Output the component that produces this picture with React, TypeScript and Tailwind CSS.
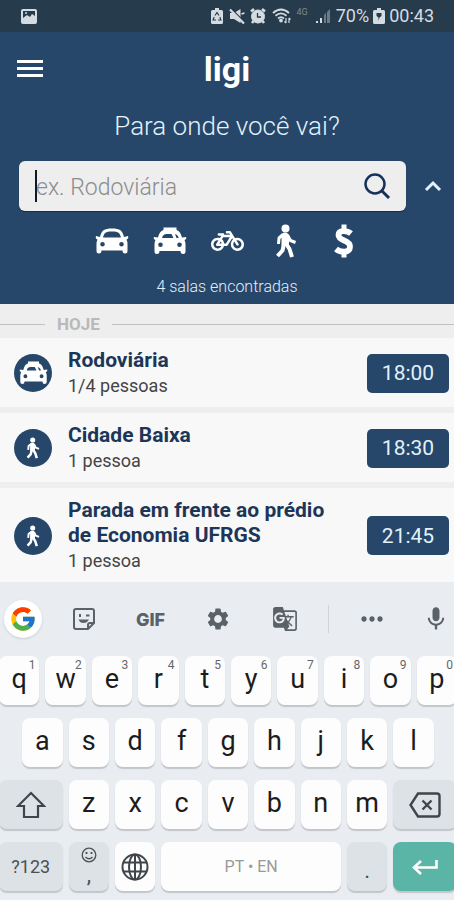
import React, { useState } from 'react';
import { FcGoogle } from 'react-icons/fc';
import { FaBicycle } from 'react-icons/fa';
import { MdSettings, MdMic, MdGTranslate, MdMoreHoriz } from 'react-icons/md';

interface IconProps { className?: string; }
interface Room { id: number; title: string; people: string; time: string; kind: 'taxi' | 'walk'; }

const rooms: Room[] = [
  { id: 1, title: 'Rodoviária', people: '1/4 pessoas', time: '18:00', kind: 'taxi' },
  { id: 2, title: 'Cidade Baixa', people: '1 pessoa', time: '18:30', kind: 'walk' },
  { id: 3, title: 'Parada em frente ao prédio de Economia UFRGS', people: '1 pessoa', time: '21:45', kind: 'walk' },
];

const CarIcon: React.FC<IconProps> = ({ className }) => (
  <svg viewBox="0 0 34 28" className={className} fill="currentColor" fillRule="evenodd">
    <path d="M5 10 C6.500 3.500 9 1.500 17 1.500 S27.500 3.500 29 10 L33 9 Q34 11.500 31.500 12.500 Q32.500 14.500 32.500 17 V24 Q32.500 26.500 30 26.500 Q27.500 26.500 27.500 23.500 H6.500 Q6.500 26.500 4 26.500 Q1.500 26.500 1.500 24 V17 Q1.500 14.500 2.500 12.500 Q0 11.500 1 9 Z M8 10.500 H26 C24.800 6 23.500 4.500 17 4.500 S9.200 6 8 10.500 Z M7.500 15 A2.300 2.300 0 1 0 7.500 19.600 A2.300 2.300 0 1 0 7.500 15 Z M26.500 15 A2.300 2.300 0 1 0 26.500 19.600 A2.300 2.300 0 1 0 26.500 15 Z" />
  </svg>
);

const TaxiIcon: React.FC<IconProps> = ({ className }) => (
  <svg viewBox="0 0 34 28" className={className} fill="currentColor" fillRule="evenodd">
    <path d="M10.500 3 V0.500 H23.500 V3 C26.500 4 27.700 6 29 10.500 L33 10 Q34 12 31.500 13 Q32.500 15 32.500 17 V24.500 Q32.500 27 30 27 Q27.500 27 27.500 24 H6.500 Q6.500 27 4 27 Q1.500 27 1.500 24.500 V17 Q1.500 15 2.500 13 Q0 12 1 10 L5 10.500 C6.300 6 7.500 4 10.500 3 Z M9 11 H20.500 L18.500 7 H13.500 C11 7 10 8 9 11 Z M23.500 11 H25.700 C25.200 9 24.600 8 22 7 Z M7.500 15.500 A2.300 2.300 0 1 0 7.500 20.100 A2.300 2.300 0 1 0 7.500 15.500 Z M26.500 15.500 A2.300 2.300 0 1 0 26.500 20.100 A2.300 2.300 0 1 0 26.500 15.500 Z" />
  </svg>
);

const WalkIcon: React.FC<IconProps> = ({ className }) => (
  <svg viewBox="0 0 22 34" className={className} fill="none" stroke="currentColor" strokeLinejoin="round">
    <circle cx="10.500" cy="4.500" r="4" fill="currentColor" stroke="none" />
    <path d="M7.500 10.500 Q10.500 8.500 13 11 L14 14 L12.500 21 H7.500 Z" fill="currentColor" strokeWidth="2" />
    <path d="M8 10.500 L4 14 L3.500 20" strokeWidth="3" />
    <path d="M13 12 L15.500 16.500 L20.500 18.500" strokeWidth="3" />
    <path d="M9 20 L7.500 26.500 L2.500 32" strokeWidth="4" />
    <path d="M11 19.500 L14.500 25 L17 33" strokeWidth="4" />
  </svg>
);

const DollarIcon: React.FC<IconProps> = ({ className }) => (
  <svg viewBox="0 0 20 34" className={className} fill="none" stroke="currentColor">
    <path d="M10 0.500 V7 M10 27 V33.500" strokeWidth="5" />
    <path d="M17 9.500 C13.500 6.500 4.500 5.500 4.500 11 C4.500 17.500 16 15.500 16 22.500 C16 29.500 6 28.500 2 25" strokeWidth="5.800" />
  </svg>
);

const StatusBar = () => (
  <div className="flex h-8 items-center justify-between bg-[#263b4b] pr-5 pl-5 text-[#d5dce1]">
    <svg viewBox="0 0 18 17" className="h-[17px] w-[18px]">
      <rect x="1" y="1" width="16" height="15" rx="2" fill="#d5dce1" />
      <path d="M3 3 H15 V8 L12 6 L10 9 L7 7 L3 10 Z" fill="#263b4b" />
      <circle cx="6" cy="5" r="1" fill="#d5dce1" />
    </svg>
    <div className="flex items-center">
      <svg viewBox="0 0 12 18" className="mr-[6px] h-[18px] w-3">
        <path d="M4 1 H8 V3 H10.500 Q12 3 12 4.500 V15.500 Q12 17 10.500 17 H1.500 Q0 17 0 15.500 V4.500 Q0 3 1.500 3 H4 Z" fill="currentColor" />
        <path d="M4 8.500 L6 5.500 L8 8.500 M8.800 10 L10 13 H7 M5 13 H2 L3.200 10" stroke="#263b4b" strokeWidth="1.100" fill="none" />
      </svg>
      <svg viewBox="0 0 16 18" className="mr-[5px] h-[18px] w-4">
        <path d="M1 6 H5 L11.500 2 V16 L5 12 H1 Z" fill="currentColor" />
        <path d="M1 0.500 L16 15.500" stroke="#263b4b" strokeWidth="1.500" />
        <path d="M1 2.500 L15 16.500" stroke="currentColor" strokeWidth="2.200" />
        <path d="M12.500 7 L15.500 6" stroke="currentColor" strokeWidth="1.800" />
      </svg>
      <svg viewBox="0 0 16 18" className="mr-[6px] h-[18px] w-4" fill="none" stroke="currentColor">
        <circle cx="8" cy="9.500" r="6.500" fill="currentColor" />
        <path d="M1 4.500 L4 2 M15 4.500 L12 2 M3.500 14 L2 16 M12.500 14 L14 16" strokeWidth="2.600" />
        <path d="M7.500 6 V10 H11" stroke="#263b4b" strokeWidth="1.300" />
      </svg>
      <svg viewBox="0 0 20 18" className="mr-[5px] h-[18px] w-5" fill="none" stroke="currentColor" strokeWidth="1.800">
        <path d="M1 6 Q9 -1 17 6 M3.500 8.800 Q9 4 14.500 8.800 M6 11.500 Q9 8.800 12 11.500" />
        <circle cx="9" cy="13.500" r="1" fill="currentColor" />
        <path d="M14 11 V16 M12.500 14.500 L14 16 M17 16 V11 M18.500 12.500 L17 11" strokeWidth="1.200" />
      </svg>
      <span className="mr-[7px] mb-2 text-[9px] leading-none text-[#7d8b96]">4G</span>
      <svg viewBox="0 0 16 16" className="mr-[5px] h-4 w-4" fill="currentColor">
        <rect x="1" y="13" width="2" height="2" /><rect x="5" y="10" width="2" height="5" /><path d="M9 7 L11 5 V15 H9 Z M12 4 L15 1 V15 H12 Z" opacity="0.400" />
      </svg>
      <span className="mr-1 text-[18px] leading-none">70%</span>
      <svg viewBox="0 0 12 18" className="mr-1 h-[18px] w-3">
        <path d="M4 1 H8 V3 H10.500 Q12 3 12 4.500 V15.500 Q12 17 10.500 17 H1.500 Q0 17 0 15.500 V4.500 Q0 3 1.500 3 H4 Z" fill="currentColor" />
        <path d="M3.500 6 H8.500 V9 L6.500 10.500 L5.500 14 V10.500 L3.500 9 Z" fill="#263b4b" />
      </svg>
      <span className="text-[18px] leading-none">00:43</span>
    </div>
  </div>
);

const Header = () => {
  const [query, setQuery] = useState('');
  const filters = [
    { label: 'Carro', icon: <CarIcon className="h-7 w-[34px]" /> },
    { label: 'Táxi', icon: <TaxiIcon className="h-7 w-[34px]" /> },
    { label: 'Bicicleta', icon: <FaBicycle className="h-[30px] w-[33px]" /> },
    { label: 'A pé', icon: <WalkIcon className="h-[34px] w-[22px]" /> },
    { label: 'Preço', icon: <DollarIcon className="h-[34px] w-5" /> },
  ];

  return (
    <header className="bg-[#264769] pb-[5px] text-white">
      <div className="grid grid-cols-3 items-center px-[17px] pt-3">
        <button aria-label="Menu" className="w-[26px]">
          <svg viewBox="0 0 26 20" className="h-5 w-[26px]" fill="currentColor">
            <path d="M0 1 H26 V4 H0 Z M0 8 H26 V11 H0 Z M0 15 H26 V18 H0 Z" />
          </svg>
        </button>
        <h1 className="text-center text-[34px] leading-[50px] font-bold">ligi</h1>
      </div>
      <label htmlFor="destino" className="mt-4 block text-center text-[26px] leading-8 font-light text-[#e2f1fb]">Para onde você vai?</label>
      <div className="mt-[19px] flex items-center pl-[19px]">
        <div className="relative flex h-[50px] min-w-0 flex-1 items-center rounded-md bg-[#eeeeee] pr-[14px] pl-[17px] shadow-[0_1px_1px_#152f50]">
          <input id="destino" value={query} onChange={e => setQuery(e.target.value)} placeholder="ex. Rodoviária" className="min-w-0 flex-1 bg-transparent pt-1 text-[23px] font-light text-[#222222] outline-none placeholder:text-[#8c8c8c]" />
          <span className="absolute left-4 h-8 w-[2px] bg-[#111827]"></span>
          <button aria-label="Buscar">
            <svg viewBox="0 0 32 32" className="h-8 w-8" fill="none" stroke="#16325c" strokeWidth="2.500">
              <circle cx="15" cy="14" r="9.500" /><path d="M21.500 20.500 L29 28" strokeWidth="3" />
            </svg>
          </button>
        </div>
        <button aria-label="Recolher" className="flex w-12 justify-center pl-[6px]">
          <svg viewBox="0 0 18 12" className="h-3 w-[18px]" fill="none" stroke="#e2f1fb" strokeWidth="3"><path d="M2 10 L9 3 L16 10" /></svg>
        </button>
      </div>
      <div className="mt-3 flex justify-center gap-6 pl-px">
        {filters.map(f => <button key={f.label} aria-label={f.label} className="flex h-9 w-[34px] items-center justify-center">{f.icon}</button>)}
      </div>
      <p className="mt-4 text-center text-[16px] leading-6 font-light text-[#e2f1fb]">4 salas encontradas</p>
    </header>
  );
};

const RoomItem: React.FC<{ room: Room }> = ({ room }) => (
  <li className="flex items-center bg-[#f8f8f8] pt-[10px] pb-[9px] pr-[5px] pl-[14px]">
    <div className="flex h-[38px] w-[38px] shrink-0 items-center justify-center rounded-full bg-[#264769] text-white">
      {room.kind === 'taxi' ? <TaxiIcon className="h-6 w-[29px]" /> : <WalkIcon className="h-[22px] w-[14px]" />}
    </div>
    <div className="ml-4 min-w-0 flex-1 pr-6">
      <h2 className="text-[21px] leading-[25px] font-bold text-[#1c3658]">{room.title}</h2>
      <p className="pt-px text-[18px] leading-6 text-[#444444]">{room.people}</p>
    </div>
    <button className="h-[39px] w-[82px] shrink-0 rounded-[5px] bg-[#264769] pt-[2px] text-[21px] text-[#e2f1fb]">{room.time}</button>
  </li>
);

const keyBase = 'relative flex h-[49px] items-center justify-center rounded-lg shadow-[0_2px_1px_#c2c6ca]';

const LetterKey: React.FC<{ letter: string; hint?: string; first?: boolean }> = ({ letter, hint, first }) => (
  <button className={`${keyBase} bg-[#fdfdfd] text-[27px] text-[#1c1c1c] ${first ? 'col-start-2 col-end-4' : 'col-span-2'}`}>
    <span className="pb-[2px]">{letter}</span>
    {hint && <span className="absolute top-[2px] right-1 text-[12px] leading-[14px] text-[#666666]">{hint}</span>}
  </button>
);

const Keyboard = () => (
  <section aria-label="Teclado" className="bg-[#e9edf1] pb-2">
    <div className="flex h-[74px] items-center pl-1 text-[#5a6167]">
      <button aria-label="Google" className="mr-2 flex h-[38px] w-[38px] items-center justify-center rounded-full bg-white shadow-sm"><FcGoogle className="h-7 w-7" /></button>
      <button aria-label="Figurinhas" className="flex w-[67px] justify-center">
        <svg viewBox="0 0 24 24" className="h-6 w-6" fill="none" stroke="currentColor" strokeWidth="2">
          <path d="M4 2 H20 Q22 2 22 4 V16 L16 22 H4 Q2 22 2 20 V4 Q2 2 4 2 Z M21.500 16 H18 Q16 16 16 18 V21.500" />
          <path d="M6.500 12.500 H17 Q15 16 11.500 16 Q8 16 6.500 12.500 Z" fill="currentColor" stroke="none" /><path d="M8 7 V10 M14 8.500 H17.500" />
        </svg>
      </button>
      <button className="w-[67px] text-center font-['Inter',sans-serif] text-[18px] font-extrabold">GIF</button>
      <button aria-label="Configurações" className="flex w-[67px] justify-center"><MdSettings className="h-[26px] w-[26px]" /></button>
      <button aria-label="Traduzir" className="flex w-[67px] justify-center"><MdGTranslate className="h-[26px] w-[26px]" /></button>
      <span className="ml-[10px] h-7 w-px bg-[#cfd4d8]"></span>
      <button aria-label="Mais" className="flex flex-1 justify-center pr-1"><MdMoreHoriz className="h-8 w-8" /></button>
      <button aria-label="Voz" className="flex w-9 justify-center"><MdMic className="h-7 w-7" /></button>
    </div>
    <div className="-mr-[3px] -ml-px grid grid-cols-20 gap-x-[6px] gap-y-[13px]">
      {'qwertyuiop'.split('').map((l, i) => <LetterKey key={l} letter={l} hint={String((i + 1) % 10)} />)}
      {'asdfghjkl'.split('').map((l, i) => <LetterKey key={l} letter={l} first={i === 0} />)}
      <button aria-label="Maiúsculas" className={`${keyBase} col-start-1 col-end-4 bg-[#dde2e6]`}>
        <svg viewBox="0 0 30 28" className="h-7 w-[30px]" fill="none" stroke="#3f454a" strokeWidth="2.200"><path d="M15 2 L28 15 H22 V26 H8 V15 H2 Z" /></svg>
      </button>
      {'zxcvbnm'.split('').map(l => <LetterKey key={l} letter={l} />)}
      <button aria-label="Apagar" className={`${keyBase} col-span-3 bg-[#dde2e6]`}>
        <svg viewBox="0 0 32 26" className="h-[26px] w-8" fill="none" stroke="#3f454a" strokeWidth="2.400"><path d="M9 1.500 H28 Q30.500 1.500 30.500 4 V22 Q30.500 24.500 28 24.500 H9 L1.500 13 Z M13.500 8.500 L22.500 17.500 M22.500 8.500 L13.500 17.500" /></svg>
      </button>
      <button className={`${keyBase} col-span-3 bg-[#dde2e6] text-[18px] text-[#4b5054]`}>?123</button>
      <button aria-label="Vírgula e emojis" className={`${keyBase} col-span-2 flex-col bg-[#dde2e6] text-[#4b5054]`}>
        <svg viewBox="0 0 16 16" className="h-4 w-4" fill="none" stroke="currentColor" strokeWidth="1.300"><circle cx="8" cy="8" r="6.800" /><path d="M4.500 10 Q8 13.500 11.500 10" /><path d="M5.500 5 V7 M10.500 5 V7" strokeWidth="1.800" /></svg>
        <span className="text-[22px] leading-6">,</span>
      </button>
      <button aria-label="Idioma" className={`${keyBase} col-span-2 bg-[#fdfdfd]`}>
        <svg viewBox="0 0 28 28" className="h-7 w-7" fill="none" stroke="#3f454a" strokeWidth="2"><circle cx="14" cy="14" r="12.500" /><ellipse cx="14" cy="14" rx="6" ry="12.500" /><path d="M14 1.500 V26.500 M2.500 9.500 H25.500 M2.500 18.500 H25.500" /></svg>
      </button>
      <button className={`${keyBase} col-span-8 bg-[#fdfdfd] text-[16px] text-[#999999]`}>PT • EN</button>
      <button className={`${keyBase} col-span-2 bg-[#dde2e6] pt-2 text-[22px] text-[#4b5054]`}>.</button>
      <button aria-label="Enter" className={`${keyBase} col-span-3 bg-[#5ab5a7]`}>
        <svg viewBox="0 0 26 18" className="h-[18px] w-[26px]" fill="none" stroke="#ffffff" strokeWidth="2.600"><path d="M24.500 2 V9.500 H2 M9 3 L2 9.500 L9 16" /></svg>
      </button>
    </div>
  </section>
);

const App: React.FC = () => (
  <div className="min-h-screen w-full overflow-hidden bg-[#eeeeee] font-['Roboto',sans-serif]">
    <StatusBar />
    <Header />
    <main>
      <div className="flex h-[34px] items-center pt-[6px] text-[#b9b9b9]">
        <span className="h-px w-[45px] bg-[#c2c2c2]"></span>
        <span className="px-3 text-[17px] leading-6 font-bold">HOJE</span>
        <span className="h-px flex-1 bg-[#c2c2c2]"></span>
      </div>
      <ul className="flex flex-col gap-[6px]">
        {rooms.map(room => <RoomItem key={room.id} room={room} />)}
      </ul>
    </main>
    <Keyboard />
  </div>
);

export default App;
